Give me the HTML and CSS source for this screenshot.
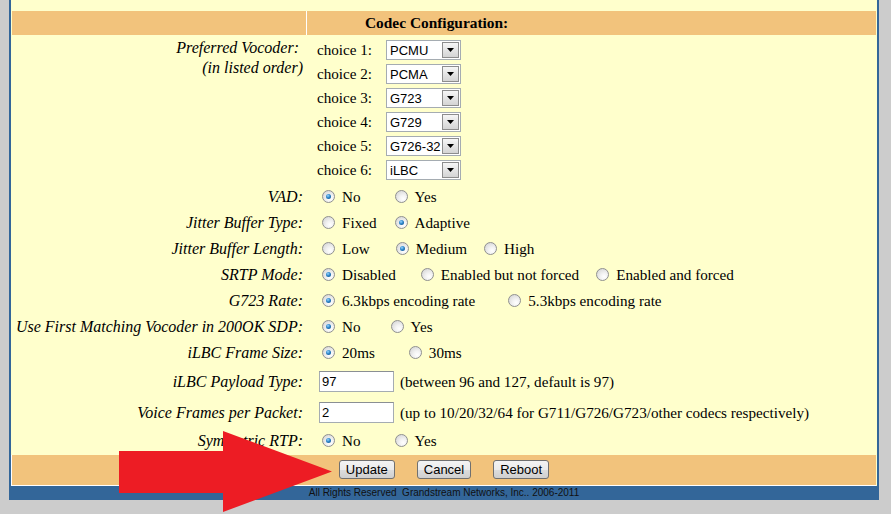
FILE: index.html
```html
<!DOCTYPE html>
<html>
<head>
<meta charset="utf-8">
<title>Codec Configuration</title>
<link rel="stylesheet" href="styles.css">
</head>
<body>
<div class="frame">
  <div class="head">
    <div class="head-l"></div>
    <div class="head-r">Codec Configuration:</div>
  </div>
  <div class="grid">
    <div class="lab lab-voc">Preferred Vocoder:&nbsp;<br>(in listed order)</div>
    <div class="val-voc">
      <div class="choice"><span class="ch-l">choice 1:</span><span class="sel"><span class="sel-t">PCMU</span><span class="sel-b"><svg width="7" height="4" viewBox="0 0 7 4"><path d="M0 0H7L3.5 4Z" fill="#000"/></svg></span></span></div>
      <div class="choice"><span class="ch-l">choice 2:</span><span class="sel"><span class="sel-t">PCMA</span><span class="sel-b"><svg width="7" height="4" viewBox="0 0 7 4"><path d="M0 0H7L3.5 4Z" fill="#000"/></svg></span></span></div>
      <div class="choice"><span class="ch-l">choice 3:</span><span class="sel"><span class="sel-t">G723</span><span class="sel-b"><svg width="7" height="4" viewBox="0 0 7 4"><path d="M0 0H7L3.5 4Z" fill="#000"/></svg></span></span></div>
      <div class="choice"><span class="ch-l">choice 4:</span><span class="sel"><span class="sel-t">G729</span><span class="sel-b"><svg width="7" height="4" viewBox="0 0 7 4"><path d="M0 0H7L3.5 4Z" fill="#000"/></svg></span></span></div>
      <div class="choice"><span class="ch-l">choice 5:</span><span class="sel"><span class="sel-t">G726-32</span><span class="sel-b"><svg width="7" height="4" viewBox="0 0 7 4"><path d="M0 0H7L3.5 4Z" fill="#000"/></svg></span></span></div>
      <div class="choice"><span class="ch-l">choice 6:</span><span class="sel"><span class="sel-t">iLBC</span><span class="sel-b"><svg width="7" height="4" viewBox="0 0 7 4"><path d="M0 0H7L3.5 4Z" fill="#000"/></svg></span></span></div>
    </div>

    <div class="lab">VAD:</div>
    <div class="val"><span class="radio on"></span><span>No</span><span class="radio g34"></span><span>Yes</span></div>

    <div class="lab">Jitter Buffer Type:</div>
    <div class="val"><span class="radio"></span><span>Fixed</span><span class="radio on g18"></span><span>Adaptive</span></div>

    <div class="lab">Jitter Buffer Length:</div>
    <div class="val"><span class="radio"></span><span>Low</span><span class="radio on g26"></span><span>Medium</span><span class="radio g17"></span><span>High</span></div>

    <div class="lab">SRTP Mode:</div>
    <div class="val"><span class="radio on"></span><span>Disabled</span><span class="radio g25"></span><span>Enabled but not forced</span><span class="radio g17"></span><span>Enabled and forced</span></div>

    <div class="lab">G723 Rate:</div>
    <div class="val"><span class="radio on"></span><span>6.3kbps encoding rate</span><span class="radio g33"></span><span>5.3kbps encoding rate</span></div>

    <div class="lab">Use First Matching Vocoder in 200OK SDP:</div>
    <div class="val"><span class="radio on"></span><span>No</span><span class="radio g30"></span><span>Yes</span></div>

    <div class="lab">iLBC Frame Size:</div>
    <div class="val"><span class="radio on"></span><span>20ms</span><span class="radio g34"></span><span>30ms</span></div>

    <div class="lab">iLBC Payload Type:</div>
    <div class="val"><span class="inp">97</span><span class="note">(between 96 and 127, default is 97)</span></div>

    <div class="lab">Voice Frames per Packet:</div>
    <div class="val"><span class="inp">2</span><span class="note">(up to 10/20/32/64 for G711/G726/G723/other codecs respectively)</span></div>

    <div class="lab">Symmetric RTP:</div>
    <div class="val"><span class="radio on"></span><span>No</span><span class="radio g34"></span><span>Yes</span></div>
  </div>
  <div class="btnrow">
    <span class="btn">Update</span>
    <span class="btn">Cancel</span>
    <span class="btn">Reboot</span>
  </div>
</div>
<div class="footer">All Rights Reserved&nbsp; Grandstream Networks, Inc.. 2006-2011</div>

<svg class="arrow" width="891" height="514" viewBox="0 0 891 514">
  <polygon points="119,451 223,451 223,431 332,471.5 223,512 223,493 119,493" fill="#ed1c24"/>
</svg>
</body>
</html>
```

FILE: styles.css
```css
html, body {
  margin: 0;
  padding: 0;
}
body {
  background: #cccccc;
  width: 891px;
  height: 514px;
  overflow: hidden;
  position: relative;
  font-family: "Liberation Serif", "Times New Roman", serif;
  font-size: 15.15px;
  color: #000;
}
.frame {
  margin-left: 9px;
  width: 866px;
  border-left: 2px solid #336699;
  border-right: 2px solid #336699;
  background: #ffffcc;
  padding-top: 11px;
}
.head {
  display: flex;
  height: 24px;
  margin-left: 1px;
  margin-right: 1px;
}
.head-l {
  width: 294px;
  background: #f2c37c;
  border-right: 1px solid #ffffff;
}
.head-r {
  flex: 1;
  background: #f2c37c;
  font-weight: bold;
  font-size: 15.4px;
  padding-left: 58px;
  display: flex;
  align-items: center;
}
.grid {
  display: grid;
  grid-template-columns: 296px 1fr;
  grid-template-rows: 149px repeat(7, 26px) 31px 31px 26px;
  padding-bottom: 1px;
}
.lab {
  font-style: italic;
  font-size: 16px;
  padding-right: 4px;
  display: flex;
  align-items: center;
  justify-content: flex-end;
  text-align: right;
  white-space: nowrap;
}
.lab-voc {
  display: block;
  padding-top: 3px;
  line-height: 20px;
}
.val-voc {
  padding: 3px 0 2px 10px;
}
.choice {
  height: 24px;
  display: flex;
  align-items: center;
}
.ch-l {
  width: 69px;
}
.sel {
  width: 75px;
  height: 20px;
  box-sizing: border-box;
  border: 1px solid #a5acb2;
  background: #fff;
  display: flex;
  align-items: center;
  justify-content: space-between;
  font-family: "Liberation Sans", Arial, sans-serif;
  font-size: 13px;
}
.sel-t {
  padding-left: 3px;
  white-space: nowrap;
}
.sel-b {
  width: 17px;
  height: 16px;
  margin-right: 1px;
  box-sizing: border-box;
  border: 1px solid #8d8d8d;
  background: linear-gradient(#f6f6f6, #d4d4d4);
  display: flex;
  align-items: center;
  justify-content: center;
}
.val {
  padding-left: 10px;
  display: flex;
  align-items: center;
  white-space: nowrap;
}
.radio {
  position: relative;
  width: 13px;
  height: 13px;
  box-sizing: border-box;
  border-radius: 50%;
  border: 1px solid #8f9090;
  background: radial-gradient(circle at 65% 70%, #ffffff 0, #f2f2f2 35%, #cfcfcf 100%);
  margin: -2px 7px 0 5px;
  flex: none;
}
.radio.on::after {
  content: "";
  position: absolute;
  left: 3px;
  top: 3px;
  width: 5px;
  height: 5px;
  border-radius: 50%;
  background: radial-gradient(circle at 40% 35%, #9ad6ff 0, #2c86c9 45%, #0a467f 100%);
}
.g17 { margin-left: 17px; }
.g18 { margin-left: 18px; }
.g25 { margin-left: 25px; }
.g26 { margin-left: 26px; }
.g30 { margin-left: 30px; }
.g33 { margin-left: 33px; }
.g34 { margin-left: 34px; }
.inp {
  width: 75px;
  height: 21px;
  box-sizing: border-box;
  margin-left: 2px;
  border: 1px solid #a5acb2;
  border-top-color: #8a8f94;
  background: #fff;
  font-family: "Liberation Sans", Arial, sans-serif;
  font-size: 13px;
  padding-left: 2px;
  display: flex;
  align-items: center;
}
.note {
  margin-left: 6px;
}
.btnrow {
  height: 30px;
  margin-right: 1px;
  background: #f2c37c;
  border-left: 1px solid #ffffff;
  border-bottom: 1px solid #ffffff;
  display: flex;
  align-items: center;
  justify-content: center;
  gap: 22px;
}
.btn {
  height: 19px;
  box-sizing: border-box;
  padding: 0 6px;
  border: 1px solid #707070;
  border-radius: 3px;
  background: linear-gradient(#f3f3f3 0, #ebebeb 50%, #dddddd 51%, #cfcfcf 100%);
  font-family: "Liberation Sans", Arial, sans-serif;
  font-size: 13px;
  display: flex;
  align-items: center;
  margin-top: -1px;
}
.footer {
  margin-left: 9px;
  width: 870px;
  height: 14px;
  background: #336699;
  font-family: "Liberation Sans", Arial, sans-serif;
  font-size: 10px;
  line-height: 14px;
  text-align: center;
  color: #111;
}
.arrow {
  position: absolute;
  left: 0;
  top: 0;
}
```
